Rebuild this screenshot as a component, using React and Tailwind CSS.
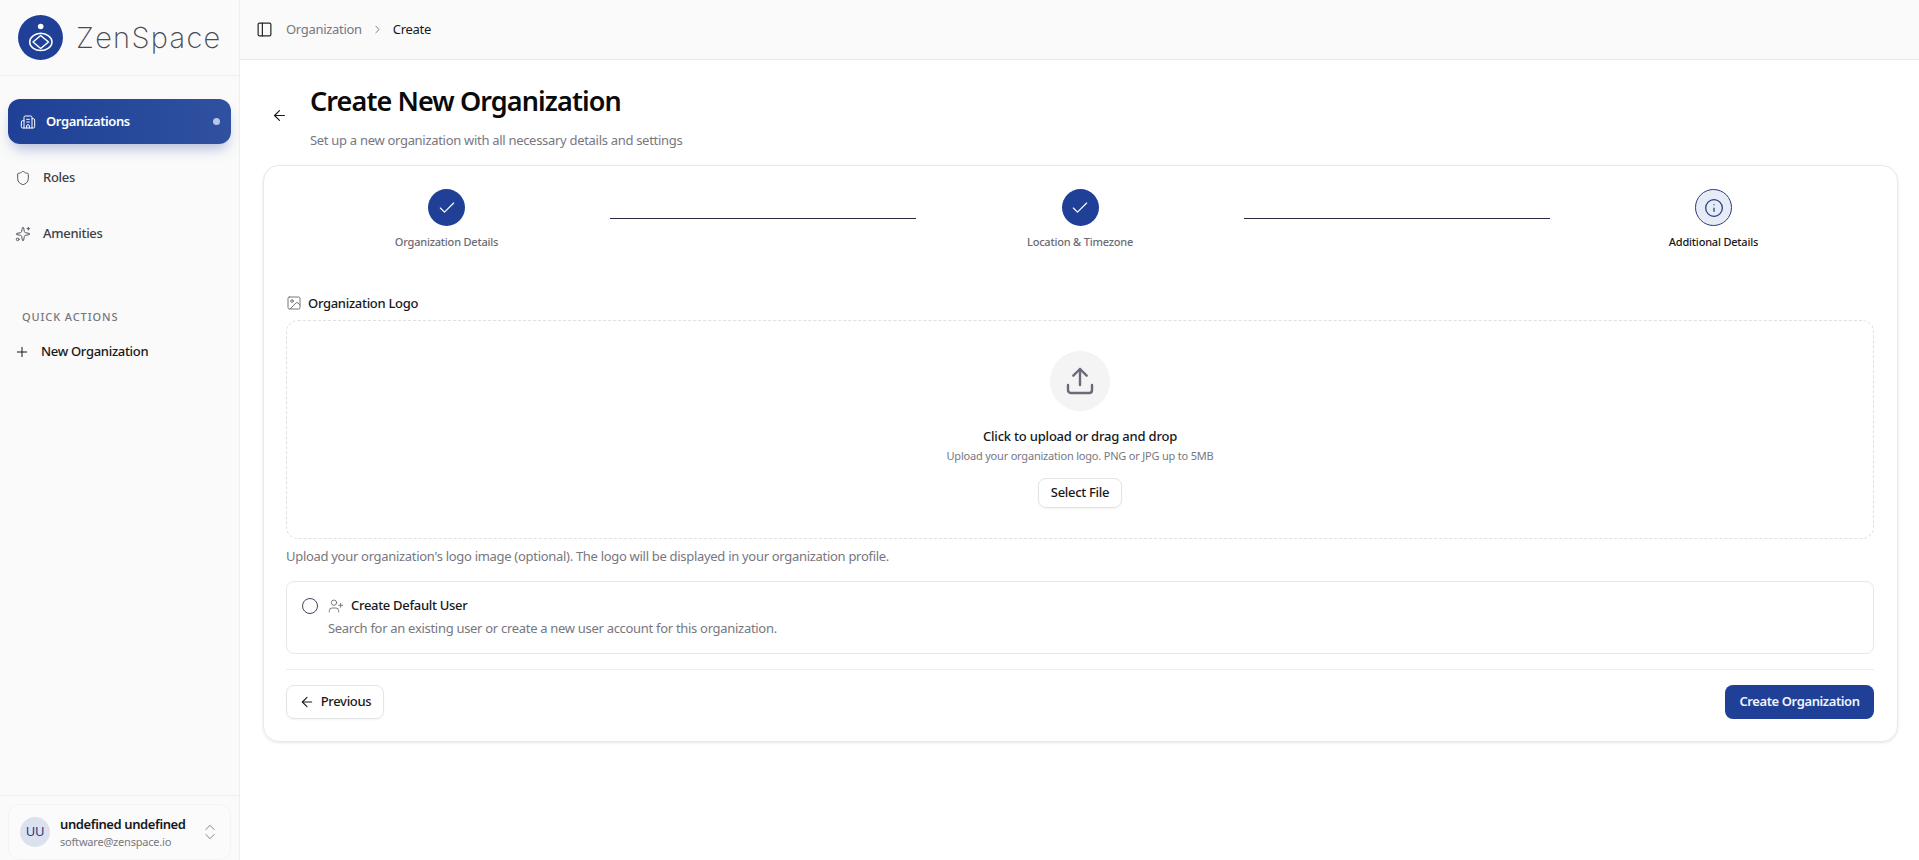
import React from "react";
import {
  ArrowLeft,
  Building2,
  Check,
  ChevronRight,
  ChevronsUpDown,
  Image,
  Info,
  PanelLeft,
  Plus,
  Shield,
  Sparkles,
  Upload,
  UserPlus,
} from "lucide-react";

const font = "font-['Noto_Sans','Liberation_Sans',sans-serif]";

const Logo = () => (
  <div className="flex items-center h-[76px] pl-[18px] border-b border-[#eeeeee]">
    <svg width="45" height="45" viewBox="0 0 45 45" className="shrink-0">
      <circle cx="22.5" cy="22.5" r="22.5" fill="#1f4096" />
      <circle cx="22.7" cy="11.5" r="2.8" fill="#ffffff" />
      <path d="M22.7 20.5 L30.5 27 L22.7 33.5 L15 27 Z" fill="none" stroke="#ffffff" strokeWidth="1.5" strokeLinejoin="round" />
      <path d="M22.7 18.3 C17 18.5 11.7 22 11.7 27 C11.7 32 17 35.5 22.7 35.5 C28.5 35.5 34 32 34 27 C34 22 28.5 18.5 22.7 18.3 Z" fill="none" stroke="#ffffff" strokeWidth="1.5" />
    </svg>
    <span className="ml-[13px] font-['Inter',sans-serif] font-extralight text-[29px] leading-none text-[#4a4a52] tracking-[1.3px]">ZenSpace</span>
  </div>
);

const NavLink = ({ icon: Icon, label }) => (
  <div className="flex items-center h-[45px] mt-[11px] pl-[7px] text-[13px] font-medium text-[#3f3f46]">
    <Icon size={16} strokeWidth={1.5} className="text-[#55555e]" />
    <span className="ml-[12px]">{label}</span>
  </div>
);

const Sidebar = () => (
  <aside className="w-[240px] shrink-0 h-full flex flex-col bg-[#fafafa] border-r border-[#eeeeee]">
    <Logo />
    <nav className="flex-1 px-2 pt-[23px]">
      <div className="flex items-center h-[45px] pl-[12px] pr-[11px] rounded-[12px] bg-gradient-to-r from-[#1f4096] to-[#2f519f] text-white text-[13px] font-semibold tracking-[-0.4px] shadow-[0_8px_14px_-4px_rgba(31,64,150,0.35)]">
        <Building2 size={16} strokeWidth={1.5} />
        <span className="ml-[10px] flex-1">Organizations</span>
        <span className="w-[7px] h-[7px] rounded-full bg-[#b8c4e8]" />
      </div>
      <NavLink icon={Shield} label="Roles" />
      <NavLink icon={Sparkles} label="Amenities" />
      <div className="mt-[53px] pl-[14px] text-[11px] leading-[16px] tracking-[0.9px] text-[#77777f] font-medium">QUICK ACTIONS</div>
      <div className="flex items-center h-[20px] mt-[17px] pl-[6px] text-[13px] font-medium text-[#18181b]">
        <Plus size={16} strokeWidth={1.5} />
        <span className="ml-[11px]">New Organization</span>
      </div>
    </nav>
    <div className="border-t border-[#eeeeee] px-2 pt-[8px]">
      <div className="flex items-center h-[56px] pl-[11px] pr-[10px] rounded-[12px] border border-[#f4f4f5] bg-[#fbfbfb]">
        <div className="w-[30px] h-[30px] rounded-full bg-[#dbe1ef] flex items-center justify-center text-[13px] text-[#1f3a80]">UU</div>
        <div className="ml-[10px] flex-1 min-w-0">
          <div className="text-[13px] leading-[17px] font-semibold tracking-[-0.4px] text-[#18181b]">undefined undefined</div>
          <div className="mt-px text-[11px] leading-[15px] tracking-[-0.2px] text-[#77777f]">software@zenspace.io</div>
        </div>
        <ChevronsUpDown size={20} strokeWidth={1.1} className="text-[#77777f]" />
      </div>
    </div>
  </aside>
);

const Header = () => (
  <header className="h-[60px] shrink-0 flex items-center pl-[16px] bg-[#fafafa] border-b border-[#e8e8e8] text-[13px]">
    <PanelLeft size={17} strokeWidth={1.7} className="text-[#27272a]" />
    <span className="ml-[13px] text-[#77777f]">Organization</span>
    <ChevronRight size={13} strokeWidth={1.6} className="ml-[9px] text-[#6b6b74]" />
    <span className="ml-[9px] text-[#18181b]">Create</span>
  </header>
);

const DoneStep = ({ label }) => (
  <div className="w-[321px] flex flex-col items-center">
    <div className="w-[37px] h-[37px] rounded-full bg-[#1f4096] flex items-center justify-center">
      <Check size={20} strokeWidth={1.4} className="text-white" />
    </div>
    <div className="mt-[8px] text-[11px] leading-[16px] tracking-[-0.2px] text-[#6b6b74] font-medium">{label}</div>
  </div>
);

const Stepper = () => (
  <div className="flex justify-between items-start">
    <DoneStep label="Organization Details" />
    <div className="w-[306px] h-px mt-[29px] bg-[#262b40]" />
    <DoneStep label="Location & Timezone" />
    <div className="w-[306px] h-px mt-[29px] bg-[#262b40]" />
    <div className="w-[321px] flex flex-col items-center">
      <div className="w-[37px] h-[37px] rounded-full bg-[#e6ebf6] border border-[#2b3f7c] flex items-center justify-center">
        <Info size={20} strokeWidth={1.5} className="text-[#1f3a80]" />
      </div>
      <div className="mt-[8px] text-[11px] leading-[16px] tracking-[-0.2px] text-[#18181b] font-medium">Additional Details</div>
    </div>
  </div>
);

const UploadBox = () => (
  <div className="mt-[6px] h-[219px] rounded-[12px] border border-dashed border-[#e0e0e0] flex flex-col items-center pt-[30px]">
    <div className="w-[60px] h-[60px] rounded-full bg-[#f4f4f5] flex items-center justify-center">
      <Upload size={32} strokeWidth={1.8} className="text-[#6b6b78]" />
    </div>
    <div className="mt-[15px] text-[13px] leading-[20px] font-medium tracking-[-0.2px] text-[#18181b]">Click to upload or drag and drop</div>
    <div className="mt-[2px] text-[11px] leading-[16px] tracking-[-0.2px] text-[#77777f]">Upload your organization logo. PNG or JPG up to 5MB</div>
    <div className="mt-[14px] w-[84px] h-[30px] rounded-[8px] border border-[#e4e4e7] flex items-center justify-center text-[13px] font-medium text-[#18181b] shadow-xs">Select File</div>
  </div>
);

const DefaultUser = () => (
  <div className="mt-[15px] h-[73px] rounded-[8px] border border-[#e8e8e8] flex pl-[15px] pt-[14px]">
    <div className="w-[16px] h-[16px] mt-[2px] rounded-full border border-[#3f4560]" />
    <div className="ml-[10px]">
      <div className="flex items-center h-[20px] text-[13px] font-medium text-[#18181b]">
        <UserPlus size={16} strokeWidth={1.3} className="text-[#6b6b74]" />
        <span className="ml-[7px]">Create Default User</span>
      </div>
      <div className="mt-[2px] text-[13px] leading-[20px] text-[#77777f]">Search for an existing user or create a new user account for this organization.</div>
    </div>
  </div>
);

export default function App() {
  return (
    <div className={`${font} flex w-full h-[860px] overflow-hidden bg-white tracking-[-0.3px]`}>
      <Sidebar />
      <main className="flex-1 min-w-0 flex flex-col">
        <Header />
        <div className="pl-[23px] pr-[21px]">
          <div className="flex pt-[23px] h-[105px]">
            <ArrowLeft size={17} strokeWidth={1.6} className="ml-[8px] mt-[24px] text-[#18181b]" />
            <div className="ml-[22px]">
              <h1 className="text-[27px] leading-[36px] font-semibold tracking-[-0.9px] text-[#0a0a0a]">Create New Organization</h1>
              <p className="mt-[11px] text-[13px] leading-[20px] text-[#77777f]">Set up a new organization with all necessary details and settings</p>
            </div>
          </div>
          <section className="h-[577px] rounded-[16px] border border-[#e8e8e8] pl-[22px] pr-[23px] pt-[23px] shadow-[0_1px_3px_rgba(0,0,0,0.1)]">
            <Stepper />
            <div className="mt-[44px] flex items-center h-[20px] text-[13px] font-medium text-[#18181b]">
              <Image size={16} strokeWidth={1.4} className="text-[#6b6b74] -mt-[2px]" />
              <span className="ml-[6px]">Organization Logo</span>
            </div>
            <UploadBox />
            <p className="mt-[7px] text-[13px] leading-[20px] text-[#77777f]">Upload your organization's logo image (optional). The logo will be displayed in your organization profile.</p>
            <DefaultUser />
            <div className="mt-[15px] border-t border-[#eeeeee] pt-[15px] flex justify-between">
              <div className="flex items-center justify-center w-[98px] h-[34px] rounded-[8px] border border-[#e4e4e7] text-[13px] font-medium text-[#18181b] shadow-xs">
                <ArrowLeft size={16} strokeWidth={1.6} />
                <span className="ml-[6px]">Previous</span>
              </div>
              <div className="flex items-center justify-center w-[149px] h-[34px] rounded-[8px] bg-[#1f4096] text-[13px] font-semibold tracking-[-0.4px] text-[#f0f3fb]">Create Organization</div>
            </div>
          </section>
        </div>
      </main>
    </div>
  );
}
